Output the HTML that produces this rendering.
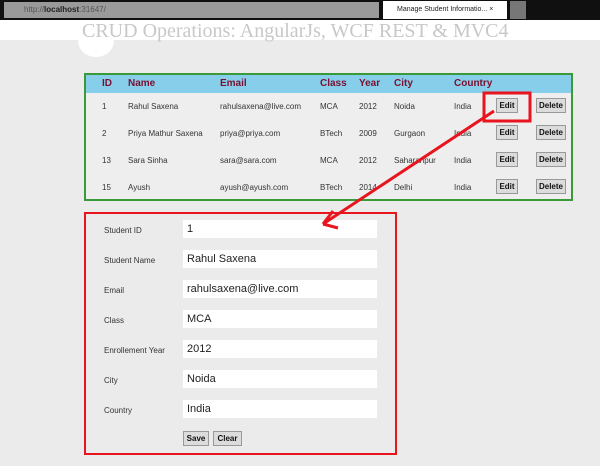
<!DOCTYPE html><html><head><style>
*{margin:0;padding:0;box-sizing:border-box}
body{width:600px;height:466px;background:#ebebeb;position:relative;overflow:hidden;font-family:"Liberation Sans",sans-serif;white-space:nowrap}
.bar{position:absolute;left:0;top:0;width:600px;height:20px;background:#101010}
.url{position:absolute;left:4px;top:2px;width:375px;height:16px;background:#9a9a9a;font-size:8px;color:#555;padding:3px 0 0 20px}
.tab{position:absolute;left:383px;top:1px;width:124px;height:18px;background:#fff;font-size:7px;padding:5px 0 0 14px;color:#222;overflow:hidden}
.tab2{position:absolute;left:510px;top:1px;width:16px;height:18px;background:#777}
.hdr{position:absolute;left:0;top:20px;width:600px;height:20px;background:#fff}
h1{position:absolute;left:82px;top:20px;font-family:"Liberation Serif",serif;font-weight:normal;font-size:20px;color:#c8c8c8;letter-spacing:0}
.circ{position:absolute;left:78px;top:25px;width:36px;height:32px;border-radius:50%;background:#fff}
.tbl{position:absolute;left:84px;top:73px;width:489px;height:128px;border:2px solid #3a9a3a;background:#eeeeee}
.th{position:absolute;top:0;left:0;width:485px;height:18px;background:#87ceeb}
.t{position:absolute;font-size:8px;color:#333}
.h{position:absolute;font-size:10px;font-weight:bold;color:#7a1030;top:3px}
.btn{position:absolute;height:15px;background:#dcdcdc;border:1px solid #999;font-size:8px;font-weight:bold;text-align:center;line-height:13px;color:#111}
.form{position:absolute;left:84px;top:212px;width:313px;height:243px;border:2px solid #e8141e}
.lb{position:absolute;left:18px;font-size:8px;color:#333}
.in{position:absolute;left:97px;width:194px;height:18px;background:#fff;font-size:11px;padding:3px 0 0 4px;color:#222}
</style></head><body>
<div class="bar"><div class="url">http://<b style="color:#222">localhost</b>:31647/</div><div class="tab">Manage Student Informatio... ×</div><div class="tab2"></div></div>
<div class="hdr"></div>
<div class="circ"></div>
<h1>CRUD Operations: AngularJs, WCF REST &amp; MVC4</h1>
<div class="tbl"><div class="th"></div>
<div class="h" style="left:16px">ID</div><div class="h" style="left:42px">Name</div><div class="h" style="left:134px">Email</div><div class="h" style="left:234px">Class</div><div class="h" style="left:273px">Year</div><div class="h" style="left:308px">City</div><div class="h" style="left:368px">Country</div>
<div style="position:absolute;top:0;left:0"><div class="t" style="left:16px;top:27px">1</div><div class="t" style="left:42px;top:27px">Rahul Saxena</div><div class="t" style="left:134px;top:27px">rahulsaxena@live.com</div><div class="t" style="left:234px;top:27px">MCA</div><div class="t" style="left:273px;top:27px">2012</div><div class="t" style="left:308px;top:27px">Noida</div><div class="t" style="left:368px;top:27px">India</div><div class="btn" style="left:410px;top:23px;width:22px">Edit</div><div class="btn" style="left:450px;top:23px;width:30px">Delete</div></div>
<div style="position:absolute;top:27px;left:0"><div class="t" style="left:16px;top:27px">2</div><div class="t" style="left:42px;top:27px">Priya Mathur Saxena</div><div class="t" style="left:134px;top:27px">priya@priya.com</div><div class="t" style="left:234px;top:27px">BTech</div><div class="t" style="left:273px;top:27px">2009</div><div class="t" style="left:308px;top:27px">Gurgaon</div><div class="t" style="left:368px;top:27px">India</div><div class="btn" style="left:410px;top:23px;width:22px">Edit</div><div class="btn" style="left:450px;top:23px;width:30px">Delete</div></div>
<div style="position:absolute;top:54px;left:0"><div class="t" style="left:16px;top:27px">13</div><div class="t" style="left:42px;top:27px">Sara Sinha</div><div class="t" style="left:134px;top:27px">sara@sara.com</div><div class="t" style="left:234px;top:27px">MCA</div><div class="t" style="left:273px;top:27px">2012</div><div class="t" style="left:308px;top:27px">Saharanpur</div><div class="t" style="left:368px;top:27px">India</div><div class="btn" style="left:410px;top:23px;width:22px">Edit</div><div class="btn" style="left:450px;top:23px;width:30px">Delete</div></div>
<div style="position:absolute;top:81px;left:0"><div class="t" style="left:16px;top:27px">15</div><div class="t" style="left:42px;top:27px">Ayush</div><div class="t" style="left:134px;top:27px">ayush@ayush.com</div><div class="t" style="left:234px;top:27px">BTech</div><div class="t" style="left:273px;top:27px">2014</div><div class="t" style="left:308px;top:27px">Delhi</div><div class="t" style="left:368px;top:27px">India</div><div class="btn" style="left:410px;top:23px;width:22px">Edit</div><div class="btn" style="left:450px;top:23px;width:30px">Delete</div></div>
</div>
<div class="form">
<div class="lb" style="top:12px">Student ID</div><div class="in" style="top:6px">1</div>
<div class="lb" style="top:42px">Student Name</div><div class="in" style="top:36px">Rahul Saxena</div>
<div class="lb" style="top:72px">Email</div><div class="in" style="top:66px">rahulsaxena@live.com</div>
<div class="lb" style="top:102px">Class</div><div class="in" style="top:96px">MCA</div>
<div class="lb" style="top:132px">Enrollement Year</div><div class="in" style="top:126px">2012</div>
<div class="lb" style="top:162px">City</div><div class="in" style="top:156px">Noida</div>
<div class="lb" style="top:192px">Country</div><div class="in" style="top:186px">India</div>
<div class="btn" style="left:97px;top:217px;width:26px">Save</div><div class="btn" style="left:127px;top:217px;width:29px">Clear</div>
</div>
<svg style="position:absolute;left:0;top:0" width="600" height="466">
<rect x="484" y="93" width="46" height="28" fill="none" stroke="#e8141e" stroke-width="3"/>
<path d="M494 111 L323 224 M323 224 L333 211 M323 224 L338 228" stroke="#e8141e" stroke-width="3" fill="none"/>
</svg>
</body></html>
